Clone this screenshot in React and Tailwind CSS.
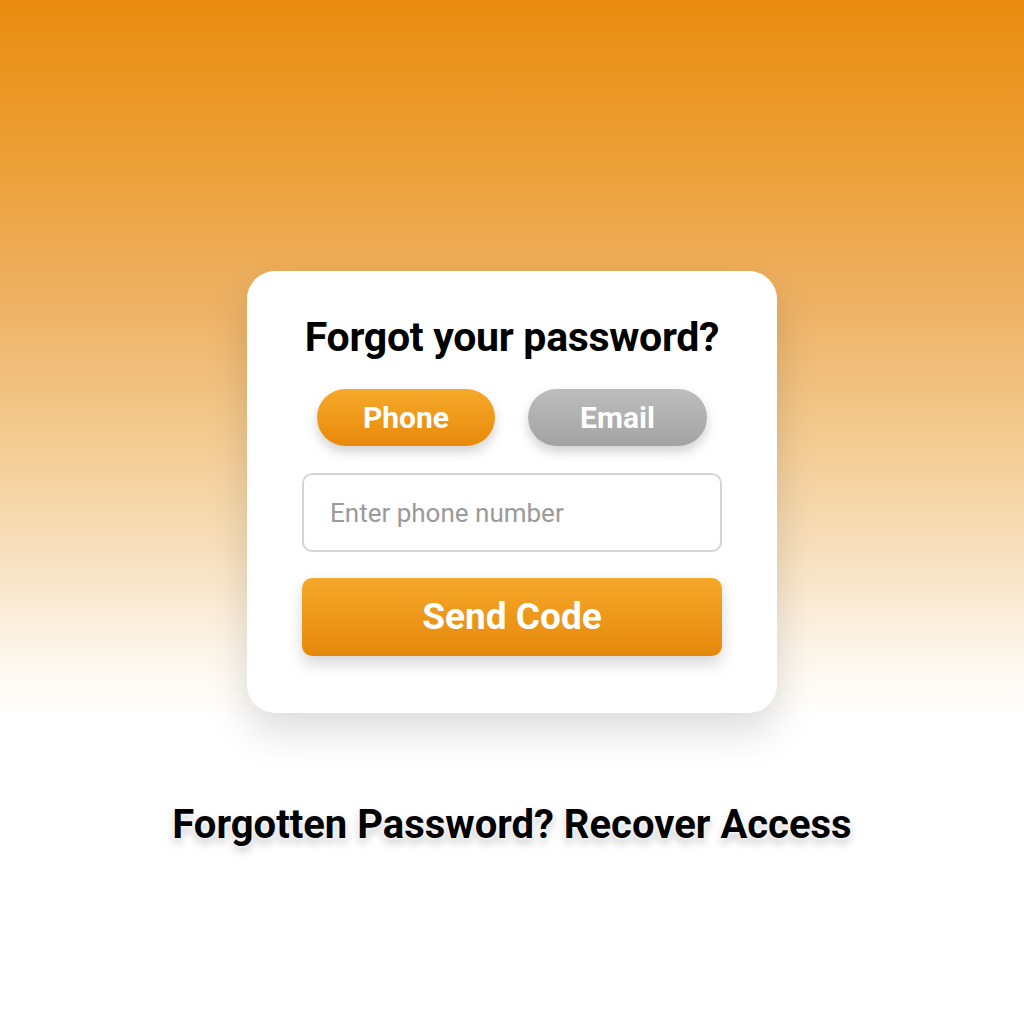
export default function App() {
  return (
    <div
      className="w-full h-[1024px] flex flex-col items-center bg-[linear-gradient(180deg,#e98c10_0%,#ec9f35_15%,#eeb266_30%,#f3c98e_42%,#f8e2c2_55%,#fdf6ec_64%,#ffffff_70%,#ffffff_100%)]"
      style={{ fontFamily: "Roboto, 'Liberation Sans', sans-serif" }}
    >
      <div className="mt-[271px] w-[530px] bg-white rounded-[28px] px-[55px] pt-[42px] pb-[57px] flex flex-col shadow-[0_18px_40px_rgba(0,0,0,0.14)]">
        <h1 className="text-center text-[41px] leading-[48px] font-bold text-black tracking-[-0.3px]">
          Forgot your password?
        </h1>
        <div className="mt-[28px] flex justify-center gap-[33px]">
          <button className="w-[178px] h-[57px] rounded-full bg-[linear-gradient(180deg,#f6a92a,#e8890a)] text-white text-[30px] font-bold shadow-[0_6px_12px_rgba(0,0,0,0.18)]">
            Phone
          </button>
          <button className="w-[179px] h-[57px] rounded-full bg-[linear-gradient(180deg,#bdbdbd,#a3a3a3)] text-white text-[30px] font-bold shadow-[0_6px_12px_rgba(0,0,0,0.18)]">
            Email
          </button>
        </div>
        <input
          className="mt-[27px] h-[79px] w-full rounded-[10px] border-2 border-[#d4d4d4] px-[26px] text-[26px] text-gray-700 placeholder:text-[#9a9a9a] outline-none"
          placeholder="Enter phone number"
        />
        <button className="mt-[26px] h-[78px] w-full rounded-[10px] bg-[linear-gradient(180deg,#f6a82a,#e5880a)] text-white text-[37px] font-bold shadow-[0_8px_16px_rgba(0,0,0,0.16)]">
          Send Code
        </button>
      </div>
      <p className="mt-[88px] text-[40px] leading-[48px] font-bold text-black [text-shadow:0_0_3px_#fff,0_0_6px_#fff,0_5px_8px_rgba(0,0,0,0.25)]">
        Forgotten Password? Recover Access
      </p>
    </div>
  );
}
